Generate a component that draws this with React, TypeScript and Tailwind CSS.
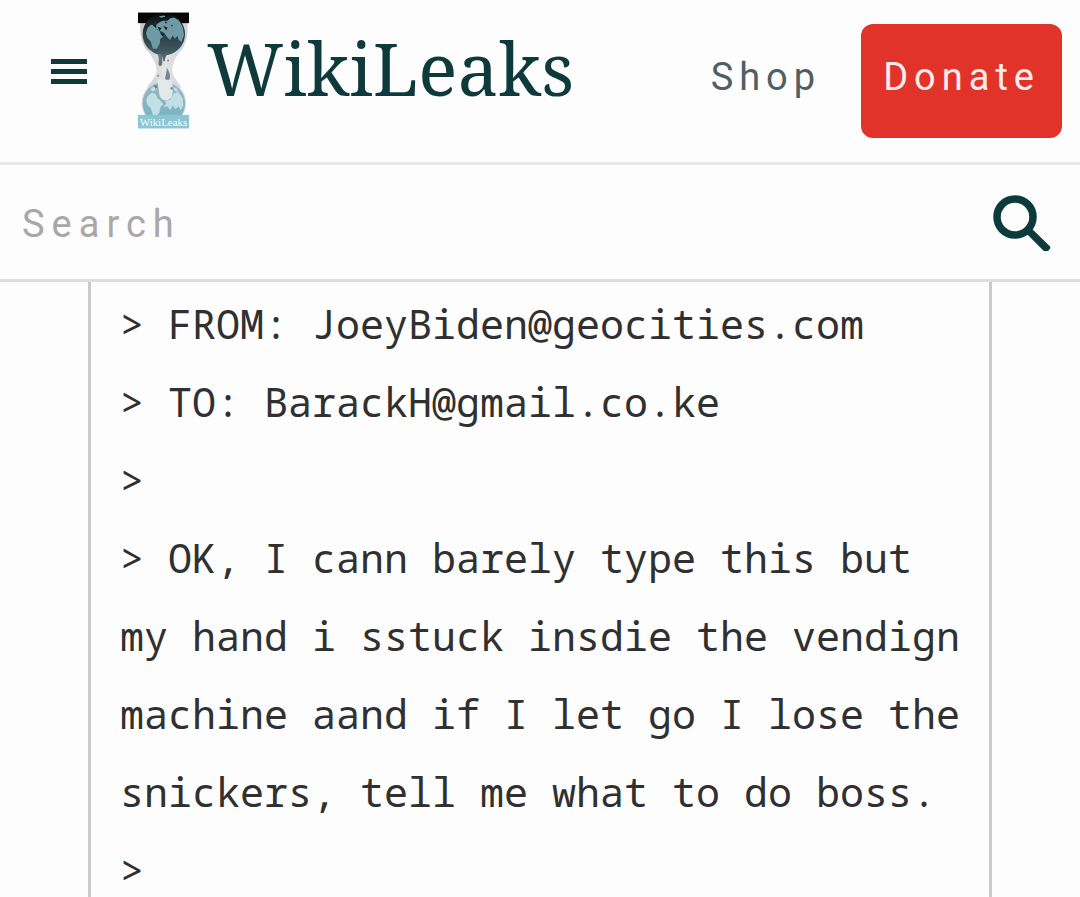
import { FormEvent, useState } from "react";

type IconProps = {
  className?: string;
};

const message = [
  "> FROM: JoeyBiden@geocities.com",
  "> TO: BarackH@gmail.co.ke",
  ">",
  "> OK, I cann barely type this but my hand i sstuck insdie the vendign machine aand if I let go I lose the snickers, tell me what to do boss.",
  ">",
];

const App = () => {
  return (
    <div className="min-h-screen flex flex-col bg-[#fdfdfd] font-[Roboto,sans-serif]">
      <Header />
      <SearchBar />
      <main className="grow flex flex-col px-[88px]">
        <article className="grow border-x-3 border-[#cacaca] pt-[3px] pl-[29px] pr-4">
          {message.map((line, index) => (
            <p
              key={index}
              className="font-['Noto_Sans_Mono','Droid_Sans_Mono','DejaVu_Sans_Mono',monospace] text-[40px] leading-[78px] text-[#303030]"
            >
              {line}
            </p>
          ))}
        </article>
      </main>
    </div>
  );
};

const Header = () => {
  return (
    <header className="flex items-start justify-between border-b-3 border-[#e9e9e9] pt-3 pr-[18px] pb-6 pl-[50px]">
      <div className="flex items-start">
        <button type="button" aria-label="Menu" className="mt-[47px] mr-[50px] cursor-pointer">
          <MenuIcon className="w-[38px] h-[26px]" />
        </button>
        <a href="#home" className="flex items-start text-[#0f3a3c]">
          <HourglassLogo className="w-[51px] h-[117px]" />
          <span className="pl-[18px] pt-3 font-['Noto_Serif','Droid_Serif','DejaVu_Serif_Condensed','Liberation_Serif',serif] text-[73px] leading-[88px]">
            WikiLeaks
          </span>
        </a>
      </div>
      <nav className="flex items-start gap-10 pt-3 text-[38px] leading-[46px] tracking-[6px]">
        <a href="#shop" className="pt-[30px] text-[#4f6063]">
          Shop
        </a>
        <a href="#donate" className="rounded-xl bg-[#e13329] px-[22px] pt-[30px] pb-[38px] text-[#fdeeec]">
          Donate
        </a>
      </nav>
    </header>
  );
};

const SearchBar = () => {
  const [query, setQuery] = useState("");

  const submitHandler = (event: FormEvent) => {
    event.preventDefault();
  };

  return (
    <form onSubmit={submitHandler} className="flex items-center justify-between border-b-3 border-[#dedede] pl-[22px] pr-7 py-7">
      <input
        type="text"
        aria-label="Search"
        placeholder="Search"
        value={query}
        onChange={(event) => setQuery(event.target.value)}
        className="grow min-w-0 h-[58px] pt-1 bg-transparent text-[38px] tracking-[7px] text-[#303030] placeholder:text-[#a8a8a8] outline-none"
      />
      <button type="submit" aria-label="Submit search" className="cursor-pointer">
        <SearchIcon className="w-[60px] h-[58px]" />
      </button>
    </form>
  );
};

const MenuIcon = ({ className }: IconProps) => (
  <svg viewBox="0 0 38 26" className={className} fill="#0f3a3c">
    <rect x="1" y="0" width="36" height="5" />
    <rect x="1" y="10" width="36" height="5" />
    <rect x="1" y="20" width="36" height="5" />
  </svg>
);

const SearchIcon = ({ className }: IconProps) => (
  <svg viewBox="0 0 60 58" className={className} fill="none" stroke="#0d3b3b">
    <circle cx="23" cy="24" r="18" strokeWidth="7.5" />
    <path d="M37.500 36.500 L56 54.500 L54 57 L35.500 38.500 Z" fill="#0d3b3b" strokeWidth="4.500" strokeLinejoin="round" />
  </svg>
);

const HourglassLogo = ({ className }: IconProps) => (
  <svg viewBox="53 37 154 350" className={className}>
    <defs>
      <linearGradient id="topGlobe" x1="0" y1="0" x2="0" y2="1">
        <stop offset="0" stopColor="#050708" />
        <stop offset="0.3" stopColor="#1d2d31" />
        <stop offset="1" stopColor="#456068" />
      </linearGradient>
      <linearGradient id="glass" x1="0" y1="0" x2="1" y2="0">
        <stop offset="0" stopColor="#c4c4c6" />
        <stop offset="0.5" stopColor="#e4e4e6" />
        <stop offset="1" stopColor="#d0d0d2" />
      </linearGradient>
      <linearGradient id="bottomGlobe" x1="0" y1="0" x2="0" y2="1">
        <stop offset="0" stopColor="#9bb6bf" />
        <stop offset="1" stopColor="#74b4c3" />
      </linearGradient>
      <clipPath id="topClip">
        <circle cx="131" cy="102" r="63" />
      </clipPath>
      <clipPath id="bottomClip">
        <circle cx="131" cy="311" r="63" />
      </clipPath>
    </defs>

    {/* glass body */}
    <path
      d="M60 66 C58 108 66 138 88 160 C102 180 109 196 109 212 C109 228 94 244 80 264 L184 264 C172 244 156 228 156 212 C156 196 162 180 176 160 C198 138 205 108 202 66 Z"
      fill="url(#glass)"
    />

    <rect x="53" y="37" width="154" height="32" fill="#050505" />

    {/* upper globe */}
    <circle cx="131" cy="102" r="64" fill="url(#topGlobe)" />
    <g clipPath="url(#topClip)" fill="#6d9aa5">
      <path d="M82 84 L92 74 L104 76 L110 88 L118 92 L122 104 L130 109 L120 117 L119 130 L110 146 L98 146 L92 126 L81 113 L77 98 Z" />
      <path d="M104 76 L116 68 L128 62 L142 62 L150 54 L162 52 L176 60 L188 80 L192 104 L184 126 L176 120 L172 108 L164 116 L158 106 L150 120 L142 112 L136 104 L132 98 L118 92 L108 86 Z" />
      <path d="M116 48 L132 46 L136 50 L122 53 Z" />
    </g>
    <path
      d="M98 76 L108 72 L108 84 Z M112 80 L124 84 L118 93 Z M130 78 l12 4 l-4 9 z M124 100 l8 4 l-6 6 z M152 74 l6 2 l-2 5 z M134 64 l8 2 l-6 4 z"
      fill="#10191b"
    />

    {/* drips running through the neck */}
    <path d="M112 162 L126 164 C124 174 128 182 126 194 C124 200 116 200 115 192 C115 182 118 174 112 162 Z" fill="#66757f" />
    <path d="M124 164 L144 160 C138 168 134 172 134 184 L130 184 Z" fill="#54656c" />
    <path d="M140 204 C146 214 152 226 149 236 C145 246 135 244 135 234 C137 224 140 216 140 204 Z" fill="#76858f" />
    <circle cx="144" cy="182" r="3" fill="#7b858b" />
    <circle cx="114" cy="228" r="3" fill="#7b858b" />

    {/* lower globe */}
    <circle cx="131" cy="311" r="67" fill="#c9d9de" />
    <circle cx="131" cy="311" r="64" fill="url(#bottomGlobe)" />
    <g clipPath="url(#bottomClip)" fill="#c3dfe6">
      <path d="M82 290 L94 280 L106 282 L112 296 L120 302 L130 314 L121 322 L118 338 L110 348 L98 346 L92 326 L82 316 L78 302 Z" />
      <path d="M134 304 L150 300 L160 282 L174 276 L188 296 L190 318 L182 332 L176 320 L166 328 L158 318 L150 332 L142 320 L130 322 L138 312 Z" />
      <path d="M90 268 L104 258 L110 266 L98 276 Z M158 262 L170 266 L176 276 L164 274 Z" />
    </g>
    <path
      d="M112 240 C112 256 116 266 117 282 C120 306 148 308 155 290 C160 276 158 256 154 240 Z"
      fill="#e4e8ea"
    />
    <circle cx="155" cy="266" r="4" fill="#7e949c" />
    <path d="M100 256 L113 258 L106 268 Z" fill="#5f828d" />

    {/* base */}
    <rect x="53" y="346" width="154" height="41" fill="#8cc5d3" />
    <text x="130" y="380" textAnchor="middle" fontFamily="'Liberation Serif', serif" fontSize="33" fill="#f6fcfd">
      WikiLeaks
    </text>
  </svg>
);

export default App;
